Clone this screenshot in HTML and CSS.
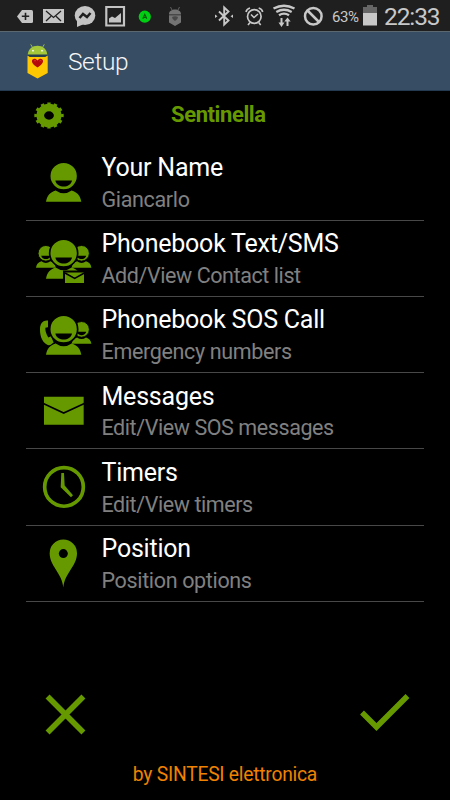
FILE: index.html
```html
<!DOCTYPE html>
<html lang="en">
<head>
<meta charset="utf-8">
<title>Setup</title>
<link rel="stylesheet" href="styles.css">
</head>
<body>
<svg class="defs" aria-hidden="true">
  <defs>
    <g id="person">
      <path d="M66 171C69 153 78 142 95 137Q119 154 143 137C160 142 169 153 172 171Z"/>
      <circle class="ring" cx="119" cy="94" r="42"/>
      <path class="cut" d="M94 107H144C139 131 99 131 94 107Z"/>
    </g>
  </defs>
</svg>
<div class="screen">
  <div class="status">
    <svg class="notifications" viewBox="0 0 200 31">
      <path fill="#c4c4c4" d="M22 10H31.500Q33 10 33 11.500V21.500Q33 23 31.500 23H22L17 16.500Z"/>
      <path stroke="#202020" stroke-width="1.600" d="M25.500 12.700V20M21.800 16.300H29.200"/>
      <path fill="#c4c4c4" d="M43 9H64V23H43Z"/>
      <path fill="none" stroke="#202020" stroke-width="1.300" d="M46 11L53.500 17.500L61 11M46 21L51 16.200M61 21L56 16.200"/>
      <ellipse fill="#c4c4c4" cx="85" cy="15.500" rx="10.300" ry="9.500"/>
      <path fill="#c4c4c4" d="M77 20V27L84 24Z"/>
      <path fill="none" stroke="#202020" stroke-width="2.500" d="M79.500 18L83 14L87 17L90.500 13"/>
      <path fill="none" stroke="#c4c4c4" stroke-width="2.200" d="M106.300 7H124V25.500H106.300Z"/>
      <path fill="#c4c4c4" d="M109 22.500V18.500L112 16.500L115 18L121 13V22.500Z"/>
      <circle fill="#00cf13" cx="144.800" cy="16.700" r="6.100"/>
      <path fill="none" stroke="#075d0c" stroke-width="1.200" d="M142.800 18.800L144.800 14.500L146.800 18.800M143.500 17.500H146.200"/>
      <path fill="#747474" d="M169 14C169 8 181 8 181 14ZM169 15H181V22.500L175 26L169 22.500Z"/>
      <path fill="none" stroke="#747474" stroke-width=".8" d="M172 10L170.500 7M178 10L179.500 7"/>
      <path fill="#484848" d="M169 14H181V15.500H169ZM172 17Q175 15.500 178 17Q178 19.500 175 21Q172 19.500 172 17Z"/>
    </svg>
    <svg class="system" viewBox="210 0 120 31">
      <g fill="none" stroke="#c8c8c8">
        <path stroke-width="1.900" d="M219 11.500L228.500 20.500L224.200 24.500V7.500L228.500 11.500L219 20.500"/>
        <path fill="#c8c8c8" stroke="none" d="M215 14.500l2.500 1.700l-2.500 1.700ZM233 14.500l-2.500 1.700l2.500 1.700Z"/>
        <circle cx="254.300" cy="16.500" r="6.800" stroke-width="1.700"/>
        <path stroke-width="1.600" d="M251 14.500L254 17.500L258 14M250 22.500L248 25M258.700 22.500L260.700 25M246 12Q246.500 9 250 8M262.700 12Q262.200 9 258.700 8"/>
        <path stroke-width="2.300" d="M273.500 8.500Q284 3 294.500 8.500M276.300 12Q284 7.500 291.700 12M279 15.300Q284 12 289 15.300"/>
        <path stroke-width="2" d="M281.500 18V24M287.500 26V20"/>
        <path fill="#c8c8c8" stroke="none" d="M278.500 22.500H284.500L281.500 27ZM284.300 21.500H290.700L287.500 17.500Z"/>
        <circle cx="313.300" cy="16.200" r="8.300" stroke-width="2.500"/>
        <path stroke-width="2.500" d="M307.500 10.500L319 22"/>
      </g>
    </svg>
    <span class="percent">63%</span>
    <svg class="battery" viewBox="0 0 14 21"><path fill="#666" d="M4 0H10V2H14V8H0V2H4Z"/><path fill="#c8c8c8" d="M0 8H14V20.500H0Z"/></svg>
    <span class="clock">22:33</span>
  </div>
  <div class="appbar">
    <svg class="logo" viewBox="25 42 26 38">
      <path fill="#a4c83a" d="M27.700 55C28 42.500 47 42.500 47.300 55Z"/>
      <path fill="none" stroke="#a4c83a" stroke-width=".9" d="M32.500 47.500L30.700 44.300M42.500 47.500L44.300 44.300"/>
      <circle fill="#fff" cx="33" cy="50.700" r=".9"/><circle fill="#fff" cx="42" cy="50.700" r=".9"/>
      <path fill="#ffc800" d="M27.500 55.500L30 57H45L47.700 55.500V73L37.500 78.500L27.500 73Z"/>
      <path fill="#263f4d" d="M27.500 54.500H47.500V55.500L44.500 57H30.500L27.500 55.500Z"/>
      <path fill="#b60909" d="M37.500 67.500C27 61.500 34 56 37.500 60.500C41 56 48 61.500 37.500 67.500Z"/>
      <path fill="none" stroke="#e54a38" stroke-width=".7" d="M34 61Q35 60 36 61M39.500 61Q40.500 60 41.500 61"/>
    </svg>
    <h1>Setup</h1>
  </div>
  <div class="heading">
    <svg class="gear" viewBox="-15 -13.500 30 27">
      <ellipse rx="8.700" ry="8" fill="none" stroke="#690" stroke-width="7.600"/>
      <ellipse rx="13.200" ry="11.600" fill="none" stroke="#690" stroke-width="3" pathLength="120" stroke-dasharray="5 5" stroke-dashoffset="2.500"/>
    </svg>
    <h2>Sentinella</h2>
  </div>
  <div class="list">
    <div class="row">
      <svg class="icon" viewBox="0 0 60 75"><g transform="translate(-10 .75) scale(.33333)"><use href="#person"/></g></svg>
      <div><div class="title">Your Name</div><div class="sub">Giancarlo</div></div>
    </div>
    <div class="row">
      <svg class="icon" viewBox="0 0 60 75"><g transform="translate(-10 .75) scale(.33333)">
        <use href="#person" transform="translate(-1 42) scale(.56)"/>
        <use href="#person" transform="translate(106 42) scale(.56)"/>
        <use href="#person"/>
        <path class="outlined" d="M120 149H183V187H120Z"/>
        <path class="line" d="M123 154L152 170L181 154"/>
      </g></svg>
      <div><div class="title">Phonebook Text/SMS</div><div class="sub mid">Add/View Contact list</div></div>
    </div>
    <div class="row">
      <svg class="icon" viewBox="0 0 60 75"><g transform="translate(-10 -1.500) scale(.33333)">
        <use href="#person" transform="translate(106 49) scale(.56)"/>
        <path d="M59 77Q65 74 72 75V95L64 97Q63 111 73 126L81 122L89 141Q81 149 73 149C57 143 48 126 48 102Q48 82 59 77Z"/>
        <use href="#person" transform="translate(0 7)"/>
      </g></svg>
      <div><div class="title">Phonebook SOS Call</div><div class="sub">Emergency numbers</div></div>
    </div>
    <div class="row">
      <svg class="icon" viewBox="0 0 60 75"><g transform="translate(-10 -77.900) scale(.33333)"><path d="M60 305H179V389H60Z"/><path class="line" d="M58 325L119 354L181 325"/></g></svg>
      <div><div class="title">Messages</div><div class="sub mid">Edit/View SOS messages</div></div>
    </div>
    <div class="row">
      <svg class="icon" viewBox="0 0 60 75"><g transform="translate(-10 .9) scale(.33333)"><circle class="dial" cx="120" cy="111" r="58"/><path d="M112 69H120L122 107L147 136L141 142L110 112Z"/></g></svg>
      <div><div class="title">Timers</div><div class="sub mid">Edit/View timers</div></div>
    </div>
    <div class="row">
      <svg class="icon" viewBox="0 0 60 75"><g transform="translate(-10 -75.400) scale(.33333)"><path d="M118 411C114 367 77 347 77 308A41 41 0 0 1 159 308C159 347 122 367 118 411Z"/><circle class="cut" cx="118" cy="309" r="13.500"/></g></svg>
      <div><div class="title">Position</div><div class="sub">Position options</div></div>
    </div>
  </div>
  <div class="actions">
    <svg class="cancel" viewBox="0 0 40 40"><path d="M2.500 2.500L37.500 37.500M37.500 2.500L2.500 37.500"/></svg>
    <svg class="accept" viewBox="0 0 50 38"><path d="M2 18.500L16.500 33L47.500 2"/></svg>
  </div>
  <div class="credit"><span>by SINTESI elettronica</span></div>
</div>
</body>
</html>
```
FILE: styles.css
```css
* { box-sizing: border-box; }
body { margin: 0; background: #000; font-family: Roboto, "Liberation Sans", sans-serif; }
h1, h2 { margin: 0; }
svg { display: block; flex: none; }
.defs { position: absolute; width: 0; height: 0; }
.screen { width: 450px; height: 800px; overflow: hidden; background: #000; }
.status { display: flex; height: 31px; background: #1f1f1f; color: #c8c8c8; white-space: nowrap; }
.notifications { width: 200px; height: 31px; }
.system { width: 120px; height: 31px; margin-left: 10px; }
.percent { width: 31px; margin-left: 2px; padding-top: 8px; font-size: 15px; line-height: 18px; letter-spacing: -.4px; }
.battery { width: 14px; height: 21px; margin-top: 5px; }
.clock { margin-left: 7px; padding-top: 2px; font-size: 24.500px; line-height: 29px; letter-spacing: -1.1px; }
.appbar { display: flex; align-items: center; height: 60px; padding-left: 25px; background: #364d64; border-top: 1px solid #5b6870; border-bottom: 1px solid #243a50; }
.logo { width: 26px; height: 38px; }
h1 { margin: 1px 0 0 17px; color: #f6f6f6; font-size: 24.500px; font-weight: 300; line-height: 30px; letter-spacing: -.4px; }
.heading { display: flex; height: 53.25px; padding-left: 34px; }
.gear { width: 30px; height: 27px; margin-top: 10.500px; }
h2 { margin: 11px 0 0 107px; color: #690; font-size: 22px; font-weight: 700; line-height: 26px; letter-spacing: -.4px; }
.row { display: flex; height: 76.25px; margin: 0 26px; padding-left: 8px; border-bottom: 1px solid #484848; white-space: nowrap; }
.icon { width: 60px; height: 75px; margin-right: 7.500px; fill: #690; }
.ring { stroke: #000; stroke-width: 5; }
.cut { fill: #000; }
.outlined { stroke: #000; stroke-width: 6; }
.line { fill: none; stroke: #000; stroke-width: 5; }
.dial { fill: none; stroke: #690; stroke-width: 11; }
.title { padding-top: 8.500px; color: #fff; font-size: 25px; line-height: 29px; letter-spacing: -.22px; }
.sub { margin-top: 4.900px; color: #808080; font-size: 21.500px; line-height: 25px; letter-spacing: -.34px; }
.mid { letter-spacing: -.42px; }
.actions { display: flex; justify-content: space-between; height: 150px; padding: 92px 40px 0 45px; }
.actions svg { fill: none; stroke: #690; stroke-width: 5.500; }
.cancel { width: 41px; height: 41px; }
.accept { width: 50px; height: 38px; }
.credit { padding-top: 11px; text-align: center; color: #f08200; font-size: 19.300px; line-height: 24px; letter-spacing: -.25px; }
```
